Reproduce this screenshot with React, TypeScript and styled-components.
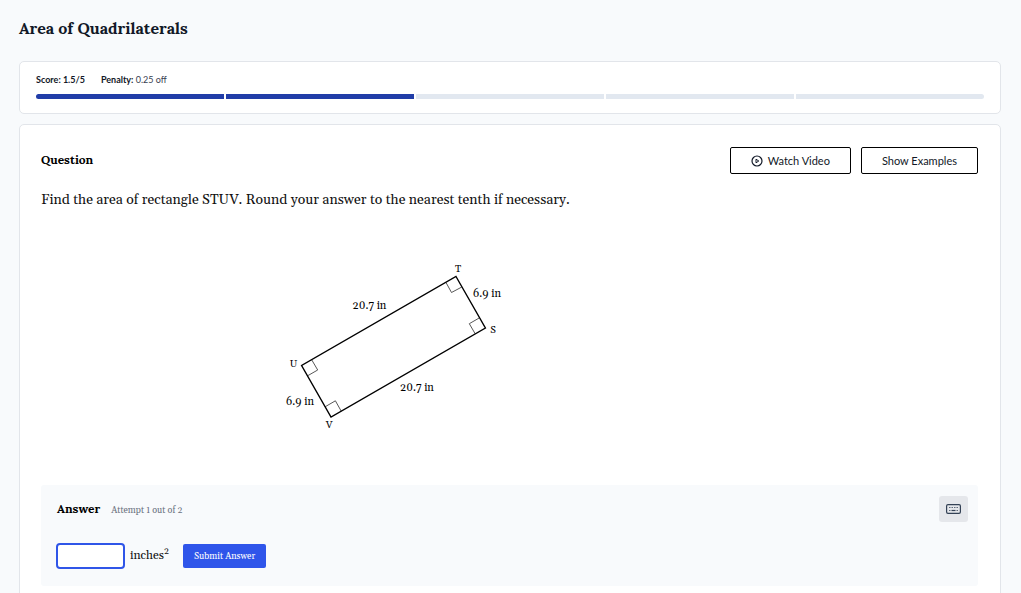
import React from "react";
import styled, { createGlobalStyle } from "styled-components";

const serif = `Gelasio, Georgia, "Liberation Serif", serif`;
const headingSerif = `Lora, Gelasio, Georgia, "Liberation Serif", serif`;
const sans = `Lato, "Liberation Sans", sans-serif`;

const GlobalStyle = createGlobalStyle`
  *, *::before, *::after { box-sizing: border-box; }
  body { margin: 0; background: #f8fafc; color: #111827; font-family: ${serif}; }
  button, input { font: inherit; }
`;

const Page = styled.main`
  padding: 16px 20px 20px 19px;
`;

const Title = styled.h1`
  margin: 0 0 21px;
  font: bold 16px/24px ${headingSerif};
`;

const Card = styled.section`
  background: #fff;
  border: 1px solid #e2e5ea;
  border-radius: 5px;
`;

const ScoreCard = styled(Card)`
  padding: 10px 16px 14px;
  margin-bottom: 10px;
`;

const Stats = styled.div`
  display: flex;
  gap: 16px;
  margin-bottom: 6px;
  font: 9px/16px ${sans};
  color: #374151;

  strong { color: #111827; }
`;

const Progress = styled.div`
  display: flex;
  gap: 2px;
  border-radius: 3px;
  overflow: hidden;
`;

const Step = styled.span<{ $done: boolean }>`
  flex: 1;
  height: 5px;
  background: ${(p) => (p.$done ? "#213da8" : "#e2e8f0")};
`;

const QuestionCard = styled(Card)`
  padding: 22px 22px 21px 21px;
`;

const Header = styled.div`
  display: flex;
  justify-content: space-between;
  align-items: flex-start;
`;

const Heading = styled.h2`
  margin: 0;
  color: #000;
  font: bold 12px/26px ${headingSerif};
`;

const Actions = styled.div`
  display: flex;
  gap: 10px;
`;

const OutlineButton = styled.button`
  display: flex;
  align-items: center;
  justify-content: center;
  gap: 5px;
  height: 27px;
  padding: 0 20px;
  background: #fff;
  border: 1px solid #000;
  border-radius: 2px;
  color: #111827;
  font: 11px/16px ${sans};
`;

const Prompt = styled.p`
  margin: 16px 0 0;
  color: #111;
  font-size: 14px;
  line-height: 20px;
`;

const Figure = styled.svg`
  display: block;
  width: 700px;
  max-width: 100%;
  height: 275px;

  text { font-family: ${serif}; font-size: 11px; fill: #000; text-anchor: middle; }
  .vertex { font-size: 10px; }
`;

const AnswerPanel = styled.form`
  padding: 11px 10px 17px 15px;
  background: #f8fafc;
  border-radius: 3px;
`;

const AnswerHeader = styled.div`
  display: flex;
  align-items: center;
  justify-content: space-between;
  margin-bottom: 21px;
  padding-left: 1px;
`;

const AnswerTitle = styled.div`
  display: flex;
  align-items: baseline;
  gap: 11px;
`;

const Attempt = styled.span`
  color: #6b7280;
  font-size: 9px;
  line-height: 16px;
`;

const KeyboardButton = styled.button`
  display: flex;
  align-items: center;
  justify-content: center;
  width: 29px;
  height: 26px;
  padding: 0;
  background: #e5e7eb;
  border: 0;
  border-radius: 3px;
`;

const AnswerRow = styled.div`
  display: flex;
  align-items: center;
`;

const AnswerInput = styled.input`
  width: 69px;
  height: 26px;
  padding: 0 6px;
  background: #fff;
  border: 2px solid #2f55e8;
  border-radius: 4px;
  outline: 0;
  font-size: 12px;
`;

const Unit = styled.label`
  margin: 0 14px 0 5px;
  color: #111;
  font-size: 12px;
  line-height: 22px;

  sup { font-size: 9px; line-height: 0; }
`;

const Submit = styled.button`
  height: 24px;
  padding: 0 11px;
  background: #2f55ea;
  border: 0;
  border-radius: 2px;
  color: #fff;
  font-size: 9px;
`;

const PlayIcon = () => (
  <svg width="12" height="12" viewBox="0 0 12 12" fill="none" stroke="#111827" strokeLinejoin="round" aria-hidden="true">
    <circle cx="6" cy="6" r="5" strokeWidth="1.2" />
    <path d="M5 4.2v3.6L7.8 6z" strokeWidth="1" />
  </svg>
);

const KeyboardIcon = () => (
  <svg width="15" height="10" viewBox="0 0 15 10" fill="none" stroke="#334155" aria-hidden="true">
    <rect x="0.6" y="0.6" width="13.8" height="8.8" rx="1.4" strokeWidth="1.2" />
    <path d="M3 3.5h1.5M5.5 3.5h1.5M8 3.5h1.5M10.5 3.5h1.5M3 6.5h1.5M10.5 6.5h1.5" strokeWidth="1.2" strokeOpacity="0.75" />
    <path d="M5.5 6.5h4" strokeWidth="1.2" />
  </svg>
);

const Rectangle = () => (
  <Figure viewBox="41 210 700 275" preserveAspectRatio="xMinYMin meet" role="img" aria-label="Rectangle STUV">
    <g fill="none" stroke="#444" strokeWidth="0.9">
      <path d="M445.9 282.3 451.5 292.5 461.8 287" />
      <path d="M479.5 317.8 469.3 323.7 475.2 333.8" />
      <path d="M341.2 411.1 335.4 400.8 325.1 406.8" />
      <path d="M311.7 359.8 317.7 370 307.4 375.9" />
    </g>
    <path d="M456 276.5 485.4 328 331 417 301.6 365.5z" fill="none" stroke="#000" strokeWidth="1.4" />
    <text className="vertex" x="458" y="272">T</text>
    <text className="vertex" x="493" y="333">S</text>
    <text className="vertex" x="293.5" y="367">U</text>
    <text className="vertex" x="329" y="428">V</text>
    <text x="369.5" y="309">20.7 in</text>
    <text x="487" y="297">6.9 in</text>
    <text x="417" y="391">20.7 in</text>
    <text x="300" y="405">6.9 in</text>
  </Figure>
);

export default function App() {
  return (
    <>
      <GlobalStyle />
      <Page>
        <Title>Area of Quadrilaterals</Title>
        <ScoreCard>
          <Stats>
            <strong>Score: 1.5/5</strong>
            <span><strong>Penalty:</strong> 0.25 off</span>
          </Stats>
          <Progress>
            {[true, true, false, false, false].map((done, i) => (
              <Step key={i} $done={done} />
            ))}
          </Progress>
        </ScoreCard>
        <QuestionCard>
          <Header>
            <Heading>Question</Heading>
            <Actions>
              <OutlineButton type="button"><PlayIcon />Watch Video</OutlineButton>
              <OutlineButton type="button">Show Examples</OutlineButton>
            </Actions>
          </Header>
          <Prompt>Find the area of rectangle STUV. Round your answer to the nearest tenth if necessary.</Prompt>
          <Rectangle />
          <AnswerPanel onSubmit={(e) => e.preventDefault()}>
            <AnswerHeader>
              <AnswerTitle>
                <Heading>Answer</Heading>
                <Attempt>Attempt 1 out of 2</Attempt>
              </AnswerTitle>
              <KeyboardButton type="button" aria-label="Toggle keyboard"><KeyboardIcon /></KeyboardButton>
            </AnswerHeader>
            <AnswerRow>
              <AnswerInput id="answer" type="text" />
              <Unit htmlFor="answer">inches<sup>2</sup></Unit>
              <Submit type="submit">Submit Answer</Submit>
            </AnswerRow>
          </AnswerPanel>
        </QuestionCard>
      </Page>
    </>
  );
}
